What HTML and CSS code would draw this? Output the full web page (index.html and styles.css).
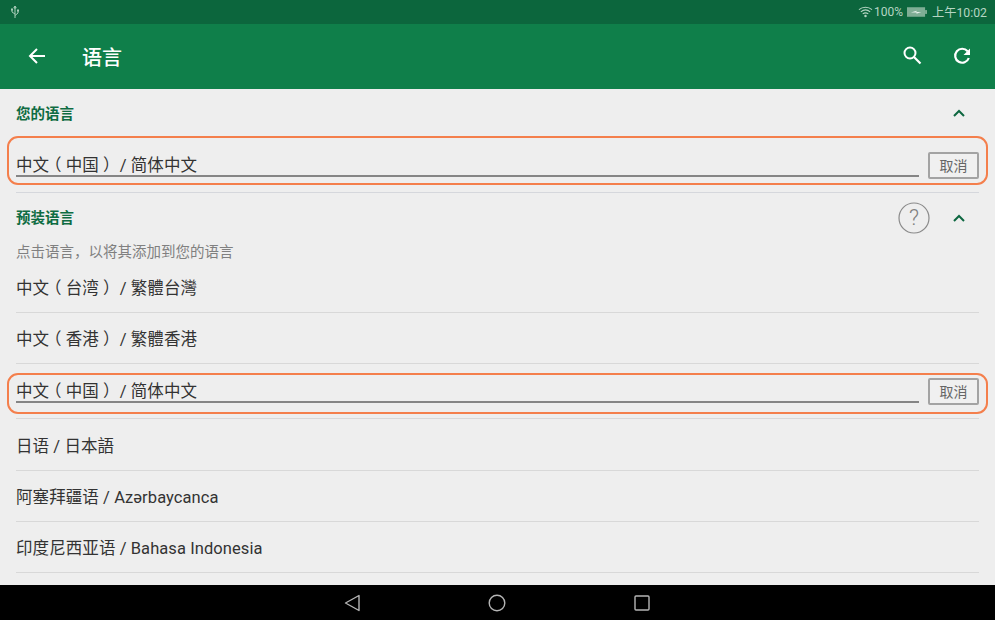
FILE: index.html
```html
<!DOCTYPE html>
<html lang="zh-CN">
<head>
<meta charset="utf-8">
<title>语言</title>
<link rel="stylesheet" href="styles.css">
</head>
<body>
<div class="screen">
  <div class="status">
    <svg class="usb" width="10" height="14" viewBox="0 0 10 14"><path d="M5 1v12M5 1L3.800 3h2.400zM5 9L2 7V5M5 10.500L8 8V6" fill="none" stroke="#a9cdb9" stroke-width="1"/><rect x="1" y="3.500" width="2" height="2" fill="#a9cdb9"/><rect x="7" y="4.500" width="2" height="2" fill="#a9cdb9"/></svg>
    <div class="status-right">
      <svg width="15" height="12" viewBox="0 0 16 12"><path d="M1 3.500C5 0 11 0 15 3.500M3 5.800C6 3.300 10 3.300 13 5.800M5 8C7 6.600 9 6.600 11 8" fill="none" stroke="#b5d5c3" stroke-width="1.100"/><circle cx="8" cy="10.300" r="1.300" fill="#b5d5c3"/></svg>
      <span class="pct">100%</span>
      <svg class="battery" width="20" height="10" viewBox="0 0 21 10"><rect x="0" y="0" width="19" height="10" fill="#7fae95"/><rect x="19" y="3" width="2" height="4" fill="#7fae95"/><path d="M4 5.500L10 3.800V5H15L10 6.800V5.500z" fill="#e4f0e9"/></svg>
      <span class="clock">上午10:02</span>
    </div>
  </div>
  <header class="appbar">
    <svg class="back" width="20" height="20" viewBox="0 0 20 20"><path d="M18 10H3M10 3L3 10l7 7" fill="none" stroke="#fff" stroke-width="2"/></svg>
    <h1 class="title">语言</h1>
    <svg class="search" width="22" height="22" viewBox="0 0 22 22"><circle cx="9" cy="9" r="5.500" fill="none" stroke="#fff" stroke-width="2"/><path d="M13 13l6.500 6.500" stroke="#fff" stroke-width="2.200"/></svg>
    <svg class="refresh" width="20" height="20" viewBox="0 0 20 20"><path d="M15.600 5.300A7 7 0 1 0 16.800 12" fill="none" stroke="#fff" stroke-width="2.200"/><path d="M18 2.500V9H11.500z" fill="#fff"/></svg>
  </header>
  <main class="content">
    <section class="head head-first">
      <h2 class="head-title">您的语言</h2>
      <svg class="chev" width="14" height="10" viewBox="0 0 14 10"><path d="M2 8l5-5 5 5" fill="none" stroke="#0d6740" stroke-width="2"/></svg>
    </section>
    <div class="selected sel-a">
      <span class="sel-text">中文<span class="paren">（</span>中国<span class="paren">）</span> / 简体中文</span>
      <button class="cancel">取消</button>
    </div>
    <div class="rule rule-a"></div>
    <section class="head head-second">
      <h2 class="head-title">预装语言</h2>
      <svg class="help" width="32" height="32" viewBox="0 0 32 32"><circle cx="16" cy="16" r="15" fill="none" stroke="#8a8a8a" stroke-width="1.200"/><text x="16" y="23" text-anchor="middle" class="help-mark">?</text></svg>
      <svg class="chev" width="14" height="10" viewBox="0 0 14 10"><path d="M2 8l5-5 5 5" fill="none" stroke="#0d6740" stroke-width="2"/></svg>
    </section>
    <p class="hint">点击语言，以将其添加到您的语言</p>
    <div class="row"><span>中文<span class="paren">（</span>台湾<span class="paren">）</span> / 繁體台灣</span></div>
    <div class="row"><span>中文<span class="paren">（</span>香港<span class="paren">）</span> / 繁體香港</span></div>
    <div class="selected sel-b">
      <span class="sel-text">中文<span class="paren">（</span>中国<span class="paren">）</span> / 简体中文</span>
      <button class="cancel">取消</button>
    </div>
    <div class="rule rule-b"></div>
    <div class="row">日语 / 日本語</div>
    <div class="row">阿塞拜疆语 / Azərbaycanca</div>
    <div class="row">印度尼西亚语 / Bahasa Indonesia</div>
  </main>
  <nav class="navbar">
    <svg width="16" height="18" viewBox="0 0 16 18"><path d="M15 1.500V16.500L1.500 9z" fill="none" stroke="#b5b5b5" stroke-width="1.400" stroke-linejoin="round"/></svg>
    <svg width="18" height="18" viewBox="0 0 18 18"><circle cx="9" cy="9" r="7.800" fill="none" stroke="#b5b5b5" stroke-width="1.400"/></svg>
    <svg width="16" height="16" viewBox="0 0 16 16"><rect x="1" y="1" width="14" height="14" rx="1" fill="none" stroke="#b5b5b5" stroke-width="1.400"/></svg>
  </nav>
</div>
</body>
</html>
```
FILE: styles.css
```css
*, *::after { box-sizing: border-box; }
html, body { margin: 0; padding: 0; }
body {
  font-family: "Roboto", "Noto Sans CJK SC", sans-serif;
  background: #eeeeee;
}
.screen {
  width: 995px;
  height: 620px;
  display: flex;
  flex-direction: column;
  overflow: hidden;
}
.status {
  height: 24px;
  flex: none;
  background: #0c663d;
  display: flex;
  align-items: center;
  padding: 0 8px 0 10px;
  justify-content: space-between;
}
.status-right {
  display: flex;
  align-items: center;
  color: #b5d5c3;
  font-size: 12px;
}
.pct { margin-left: 1px; }
.battery { margin: 0 5px 0 4px; }
.clock { font-size: 12.250px; }
.appbar {
  height: 65px;
  flex: none;
  background: #0f7f4a;
  display: flex;
  align-items: center;
  padding: 0 23px 0 27px;
  color: #fff;
}
.title {
  margin: 0 0 0 35px;
  font-size: 20px;
  font-weight: 500;
  flex: 1;
}
.back { margin-top: -2px; }
.search { margin: -3px 29px 0 0; }
.refresh { margin-top: -2px; }
.content {
  flex: 1;
  min-height: 0;
  background: #eeeeee;
  padding: 0 16px;
  overflow: hidden;
}
.head {
  display: flex;
  align-items: center;
  justify-content: space-between;
  padding-right: 13px;
}
.head-first { height: 48px; }
.head-second { height: 49px; }
.head-second .head-title { flex: 1; }
.help { margin-right: 22px; }
.head-title {
  margin: 0 0 2px;
  font-size: 14.500px;
  font-weight: 700;
  color: #0e6c42;
}
.selected {
  position: relative;
  display: flex;
  align-items: flex-end;
  justify-content: space-between;
}
.selected::after {
  content: "";
  position: absolute;
  left: -9px;
  right: -9px;
  border: 2px solid #f47f4c;
  border-radius: 11px;
  pointer-events: none;
}
.sel-a { height: 42px; }
.sel-a::after { top: -1px; height: 49px; }
.sel-b { height: 41px; }
.sel-b::after { top: 9px; height: 41px; }
.sel-text {
  flex: 1;
  margin: 0 9px 2px 0;
  font-size: 16.500px;
  line-height: 18px;
  letter-spacing: 0.080px;
  color: #333;
  border-bottom: 2px solid #858585;
}
.paren {
  font-feature-settings: "halt";
  padding: 0 4.125px;
}
.cancel {
  width: 51px;
  height: 27px;
  padding: 0 0 1px;
  background: #f0f0f0;
  border: 2px solid #a3a3a3;
  border-radius: 2px;
  font-family: inherit;
  font-size: 14px;
  color: #666;
}
.rule { height: 1px; background: #d5d7dc; }
.rule-a { margin-top: 13px; }
.rule-b { margin: 13px 0 1px; background: #d8d8d8; }
.hint {
  margin: 0;
  padding-top: 1px;
  font-size: 14.500px;
  line-height: 19px;
  color: #808080;
}
.row {
  height: 51px;
  display: flex;
  align-items: center;
  font-size: 16.500px;
  letter-spacing: 0.080px;
  color: #333;
  border-bottom: 1px solid #d8d8d8;
}
.help-mark { font-family: "Roboto", sans-serif; font-weight: 300; font-size: 22px; fill: #808080; }
.navbar {
  height: 35px;
  flex: none;
  background: #000;
  display: flex;
  align-items: center;
  justify-content: center;
  gap: 128px;
  padding-right: 2px;
}
```
